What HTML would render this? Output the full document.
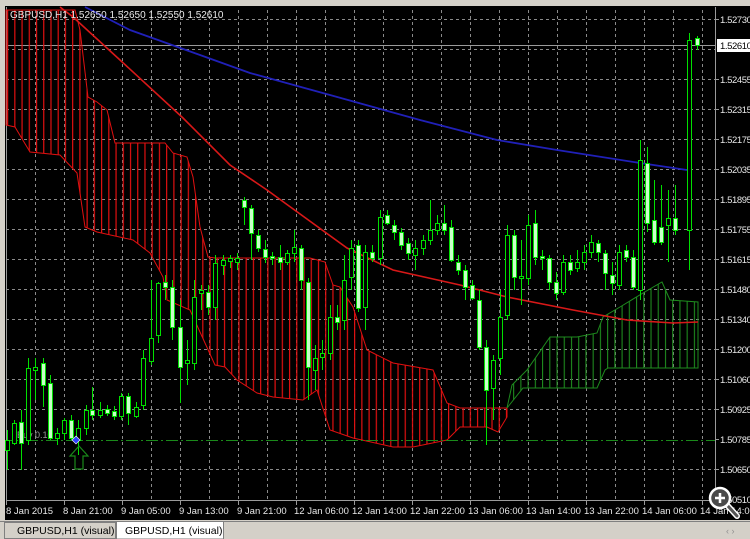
<!DOCTYPE html>
<html><head><meta charset="utf-8"><style>
html,body{margin:0;padding:0;background:#000;width:750px;height:539px;overflow:hidden}
svg{display:block}
text{font-family:"Liberation Sans",sans-serif}
</style></head><body>
<svg width="750" height="539" viewBox="0 0 750 539" xmlns="http://www.w3.org/2000/svg">
<defs>
<pattern id="rs" patternUnits="userSpaceOnUse" width="7.23" height="10" x="7">
<rect x="0" y="0" width="1.2" height="10" fill="#e01010"/></pattern>
<pattern id="gs" patternUnits="userSpaceOnUse" width="7.23" height="10" x="7">
<rect x="0" y="0" width="1.1" height="10" fill="#1e8a1e"/></pattern>
</defs>
<rect x="0" y="0" width="750" height="539" fill="#000"/>
<rect x="0" y="0" width="750" height="6" fill="#d4d0c8"/>
<rect x="0" y="0" width="5" height="520" fill="#d4d0c8"/>
<g stroke="#8a8a8a" stroke-width="1" stroke-dasharray="3,3">
<path d="M6,19.5H715M6,49.5H715M6,79.5H715M6,109.5H715M6,139.5H715M6,169.5H715M6,199.5H715M6,229.5H715M6,259.5H715M6,289.5H715M6,319.5H715M6,349.5H715M6,379.5H715M6,409.5H715"/>
<path d="M6,469.5H715"/>
<path d="M35.5,10V500M64.5,10V500M93.5,10V500M122.5,10V500M151.5,10V500M180.5,10V500M209.5,10V500M238.5,10V500M267.5,10V500M296.5,10V500M325.5,10V500M354.5,10V500M383.5,10V500M412.5,10V500M441.5,10V500M470.5,10V500M499.5,10V500M528.5,10V500M557.5,10V500M586.5,10V500M615.5,10V500M644.5,10V500M673.5,10V500M702.5,10V500"/>
</g>
<path d="M6.5,7V500.5H715.5V7" fill="none" stroke="#9a9a9a"/>
<path d="M6,45.5H715" stroke="#9a9a9a"/>
<path d="M6,10L75,10L80,30L88,97L97,102L107,110L115,143L165,143L173,153L187,157L193,177L200,227L208,257L215,258L310,258L325,262L333,285L340,287L353,307L367,350L373,353L393,363L433,370L447,403L460,408L507,408L507,417L498,432L487,427L460,427L447,440L413,447L393,447L353,438L330,430L317,390L303,400L273,397L257,393L237,380L225,367L215,365L190,310L167,300L163,277L150,253L133,240L97,232L85,227L77,173L60,155L30,152L15,127L6,125Z" fill="url(#rs)" stroke="#e01010" stroke-width="1"/>
<path d="M507,408L512,385L527,370L550,337L577,337L597,333L603,317L620,307L643,293L662,282L670,300L698,302L698,368L608,368L605,370L597,388L540,388L523,388Z" fill="url(#gs)" stroke="#1e8a1e" stroke-width="1"/>
<path d="M60,7L73,17L120,60L183,118L230,165L267,190L347,248L393,270L460,285L507,297L573,310L627,320L673,323L698,322" fill="none" stroke="#d81818" stroke-width="1.6"/>
<path d="M85,7L130,30L200,55L250,73L330,95L420,120L497,140L557,150L640,163L687,170" fill="none" stroke="#2020b8" stroke-width="1.8"/>
<path d="M6,440.5H715" stroke="#1a8a1a" stroke-dasharray="12,3,2,3"/>
<text x="17" y="438" font-size="9" fill="#9a9a9a">Buy 0.10</text>
<g stroke="#00e000" stroke-width="1">
<path d="M7.5,430V470M14.5,420V445M21.5,410V470M28.5,358V445M35.5,358V400M43.5,358V407M50.5,375V440M57.5,428V445M64.5,418V440M71.5,415V440M78.5,420V455M86.5,405V435M92.5,387V420M100.5,402V418M107.5,405V416M114.5,406V420M121.5,393V420M128.5,393V425M136.5,402V418M143.5,350V410M151.5,280V365M158.5,282V343M165.5,275V300M172.5,280V340M180.5,300V403M187.5,340V385M194.5,280V370M201.5,285V310M208.5,285V315M215.5,255V320M223.5,255V275M230.5,255V268M237.5,253V270M244.5,197V225M251.5,205V260M258.5,230V252M265.5,240V263M272.5,252V265M280.5,245V270M287.5,250V265M294.5,230V262M301.5,245V290M308.5,278V400M315.5,345V390M322.5,340V370M330.5,305V360M337.5,305V330M344.5,255V330M351.5,240V290M358.5,240V312M365.5,245V330M372.5,245V262M380.5,210V265M387.5,210V225M394.5,220V240M401.5,228V250M408.5,238V260M415.5,240V270M423.5,235V255M430.5,200V245M437.5,215V235M444.5,205V235M451.5,220V262M458.5,255V275M465.5,265V300M472.5,280V300M479.5,290V350M486.5,340V445M493.5,355V420M500.5,290V375M507.5,225V320M514.5,230V290M521.5,240V305M528.5,215V285M535.5,210V265M542.5,250V270M549.5,255V290M556.5,272V300M563.5,255V295M570.5,255V275M577.5,250V272M584.5,245V270M591.5,235V258M598.5,240V262M605.5,250V290M612.5,262V295M619.5,245V290M626.5,245V262M633.5,250V290M640.5,140V300M647.5,147V232M654.5,180V245M661.5,185V245M668.5,190V262M675.5,185V235M689.5,33V270M697.5,36V50"/>
</g>
<g stroke="#00e000" stroke-width="1" fill="#000">
<rect x="5.5" y="440.5" width="4" height="10"/><rect x="12.5" y="423.5" width="4" height="20"/><rect x="26.5" y="368.5" width="4" height="72"/><rect x="33.5" y="367.5" width="4" height="3"/><rect x="55.5" y="433.5" width="4" height="5"/><rect x="62.5" y="420.5" width="4" height="13"/><rect x="76.5" y="428.5" width="4" height="12"/><rect x="84.5" y="410.5" width="4" height="18"/><rect x="98.5" y="410.5" width="4" height="5"/><rect x="119.5" y="396.5" width="4" height="20"/><rect x="134.5" y="407.5" width="4" height="9"/><rect x="141.5" y="358.5" width="4" height="47"/><rect x="149.5" y="338.5" width="4" height="23"/><rect x="156.5" y="283.5" width="4" height="52"/><rect x="185.5" y="360.5" width="4" height="3"/><rect x="192.5" y="297.5" width="4" height="66"/><rect x="199.5" y="290.5" width="4" height="3"/><rect x="213.5" y="263.5" width="4" height="44"/><rect x="221.5" y="260.5" width="4" height="5"/><rect x="228.5" y="258.5" width="4" height="3"/><rect x="235.5" y="258.5" width="4" height="4"/><rect x="285.5" y="253.5" width="4" height="9"/><rect x="292.5" y="247.5" width="4" height="6"/><rect x="313.5" y="358.5" width="4" height="12"/><rect x="320.5" y="353.5" width="4" height="4"/><rect x="328.5" y="317.5" width="4" height="36"/><rect x="342.5" y="280.5" width="4" height="40"/><rect x="349.5" y="248.5" width="4" height="29"/><rect x="363.5" y="252.5" width="4" height="55"/><rect x="378.5" y="217.5" width="4" height="41"/><rect x="413.5" y="248.5" width="4" height="7"/><rect x="421.5" y="240.5" width="4" height="8"/><rect x="428.5" y="230.5" width="4" height="10"/><rect x="435.5" y="223.5" width="4" height="7"/><rect x="491.5" y="360.5" width="4" height="28"/><rect x="498.5" y="317.5" width="4" height="41"/><rect x="505.5" y="235.5" width="4" height="80"/><rect x="519.5" y="276.5" width="4" height="2"/><rect x="526.5" y="225.5" width="4" height="53"/><rect x="561.5" y="262.5" width="4" height="30"/><rect x="575.5" y="262.5" width="4" height="6"/><rect x="582.5" y="252.5" width="4" height="10"/><rect x="589.5" y="242.5" width="4" height="10"/><rect x="617.5" y="252.5" width="4" height="33"/><rect x="638.5" y="160.5" width="4" height="130"/><rect x="666.5" y="218.5" width="4" height="7"/><rect x="687.5" y="40.5" width="4" height="190"/>
</g>
<g stroke="#00e000" stroke-width="1" fill="#c8ffc8">
<rect x="19.5" y="422.5" width="4" height="21"/><rect x="41.5" y="363.5" width="4" height="22"/><rect x="48.5" y="383.5" width="4" height="55"/><rect x="69.5" y="420.5" width="4" height="18"/><rect x="90.5" y="410.5" width="4" height="5"/><rect x="105.5" y="409.5" width="4" height="4"/><rect x="112.5" y="411.5" width="4" height="5"/><rect x="126.5" y="396.5" width="4" height="17"/><rect x="163.5" y="282.5" width="4" height="5"/><rect x="170.5" y="287.5" width="4" height="40"/><rect x="178.5" y="327.5" width="4" height="40"/><rect x="206.5" y="292.5" width="4" height="15"/><rect x="242.5" y="200.5" width="4" height="7"/><rect x="249.5" y="208.5" width="4" height="25"/><rect x="256.5" y="235.5" width="4" height="13"/><rect x="263.5" y="249.5" width="4" height="8"/><rect x="270.5" y="256.5" width="4" height="2"/><rect x="278.5" y="257.5" width="4" height="5"/><rect x="299.5" y="248.5" width="4" height="32"/><rect x="306.5" y="282.5" width="4" height="85"/><rect x="335.5" y="317.5" width="4" height="5"/><rect x="356.5" y="245.5" width="4" height="63"/><rect x="370.5" y="252.5" width="4" height="6"/><rect x="385.5" y="215.5" width="4" height="8"/><rect x="392.5" y="225.5" width="4" height="7"/><rect x="399.5" y="232.5" width="4" height="13"/><rect x="406.5" y="243.5" width="4" height="10"/><rect x="442.5" y="223.5" width="4" height="7"/><rect x="449.5" y="227.5" width="4" height="33"/><rect x="456.5" y="262.5" width="4" height="8"/><rect x="463.5" y="270.5" width="4" height="17"/><rect x="470.5" y="285.5" width="4" height="13"/><rect x="477.5" y="300.5" width="4" height="47"/><rect x="484.5" y="347.5" width="4" height="43"/><rect x="512.5" y="235.5" width="4" height="42"/><rect x="533.5" y="223.5" width="4" height="34"/><rect x="540.5" y="256.5" width="4" height="2"/><rect x="547.5" y="258.5" width="4" height="24"/><rect x="554.5" y="282.5" width="4" height="11"/><rect x="568.5" y="262.5" width="4" height="8"/><rect x="596.5" y="243.5" width="4" height="9"/><rect x="603.5" y="253.5" width="4" height="20"/><rect x="610.5" y="275.5" width="4" height="8"/><rect x="624.5" y="250.5" width="4" height="7"/><rect x="631.5" y="257.5" width="4" height="30"/><rect x="645.5" y="163.5" width="4" height="60"/><rect x="652.5" y="220.5" width="4" height="22"/><rect x="659.5" y="227.5" width="4" height="15"/><rect x="673.5" y="218.5" width="4" height="12"/><rect x="695.5" y="38.5" width="4" height="7"/>
</g>
<path d="M76,436L80,440L76,444L72,440Z" fill="#3040ff" stroke="#fff" stroke-width="0.6"/>
<path d="M79,446L88,456H83V469H75V456H70Z" fill="none" stroke="#1a8a1a" stroke-width="1.2"/>
<text x="10" y="18" font-size="10" fill="#e8e8e8">GBPUSD,H1  1.52650 1.52650 1.52550 1.52610</text>
<g font-size="9.5" fill="#e8e8e8" letter-spacing="-0.4">
<text x="720" y="23">1.52730</text><text x="720" y="83">1.52455</text><text x="720" y="113">1.52315</text><text x="720" y="143">1.52175</text><text x="720" y="173">1.52035</text><text x="720" y="203">1.51895</text><text x="720" y="233">1.51755</text><text x="720" y="263">1.51615</text><text x="720" y="293">1.51480</text><text x="720" y="323">1.51340</text><text x="720" y="353">1.51200</text><text x="720" y="383">1.51060</text><text x="720" y="413">1.50925</text><text x="720" y="443">1.50785</text><text x="720" y="473">1.50650</text><text x="720" y="503">1.50510</text>
</g>
<path d="M715,19.5H719M715,79.5H719M715,109.5H719M715,139.5H719M715,169.5H719M715,199.5H719M715,229.5H719M715,259.5H719M715,289.5H719M715,319.5H719M715,349.5H719M715,379.5H719M715,409.5H719M715,439.5H719M715,469.5H719" stroke="#9a9a9a"/>
<rect x="717" y="39" width="33" height="13" fill="#fff"/>
<text x="720" y="49" font-size="9.5" fill="#000" letter-spacing="-0.4">1.52610</text>
<path d="M6.5,500V505M64.5,500V505M122.5,500V505M180.5,500V505M238.5,500V505M296.5,500V505M354.5,500V505M412.5,500V505M470.5,500V505M528.5,500V505M586.5,500V505M644.5,500V505M702.5,500V505" stroke="#9a9a9a"/>
<g font-size="9.5" fill="#e8e8e8">
<text x="6" y="514">8 Jan 2015</text><text x="63" y="514">8 Jan 21:00</text><text x="121" y="514">9 Jan 05:00</text><text x="179" y="514">9 Jan 13:00</text><text x="237" y="514">9 Jan 21:00</text><text x="294" y="514">12 Jan 06:00</text><text x="352" y="514">12 Jan 14:00</text><text x="410" y="514">12 Jan 22:00</text><text x="468" y="514">13 Jan 06:00</text><text x="526" y="514">13 Jan 14:00</text><text x="584" y="514">13 Jan 22:00</text><text x="642" y="514">14 Jan 06:00</text><text x="700" y="514">14 Jan 14:00</text>
</g>
<line x1="727" y1="505" x2="737" y2="516" stroke="#fff" stroke-width="6" stroke-linecap="round"/>
<line x1="727" y1="505" x2="737" y2="516" stroke="#555" stroke-width="3" stroke-linecap="round"/>
<circle cx="720" cy="498" r="10" fill="#4a4a4a" stroke="#fff" stroke-width="2.5"/>
<path d="M715,498H725M720,493V503" stroke="#fff" stroke-width="2.5"/>
<rect x="0" y="520" width="750" height="19" fill="#d4d0c8"/>
<path d="M0,521.5H750" stroke="#808080"/>
<rect x="4.5" y="522.5" width="111" height="16" fill="#d4d0c8" stroke="#808080"/>
<rect x="116.5" y="521.5" width="107" height="17.5" fill="#fff" stroke="#808080"/>
<text x="17" y="534" font-size="10.5" fill="#000">GBPUSD,H1 (visual)</text>
<text x="125" y="534" font-size="10.5" fill="#000">GBPUSD,H1 (visual)</text>
<text x="726" y="534" font-size="9" fill="#909090">‹ ›</text>
</svg>
</body></html>
